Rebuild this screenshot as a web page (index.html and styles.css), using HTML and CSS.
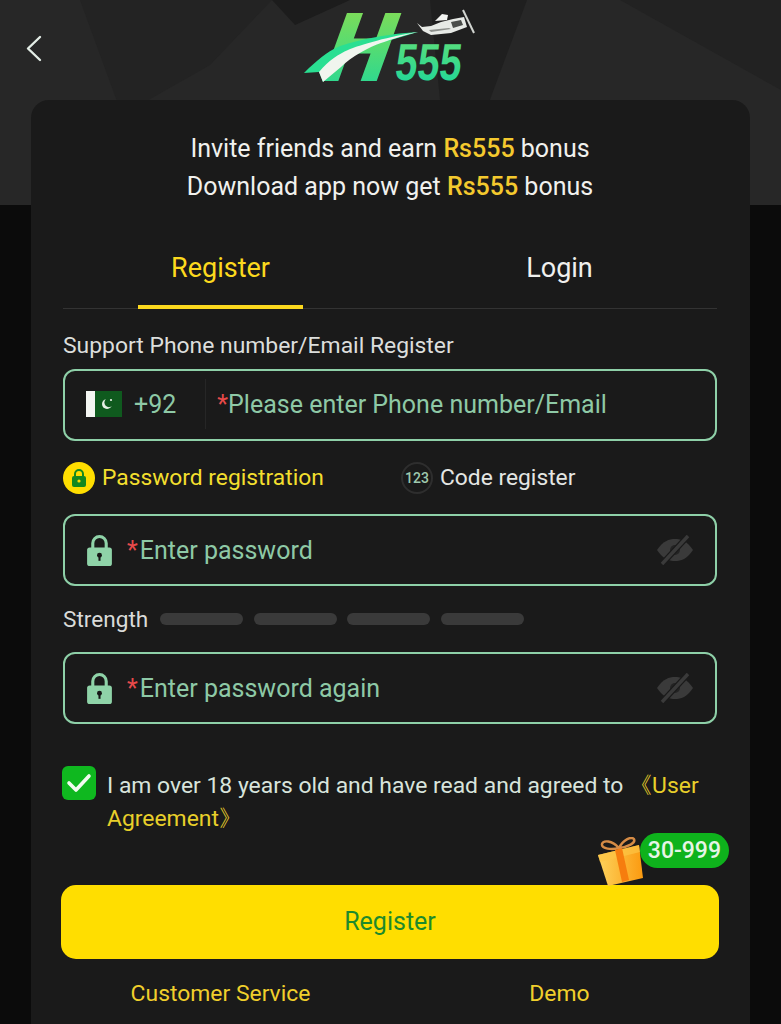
FILE: index.html
```html
<!DOCTYPE html>
<html lang="en">
<head>
    <meta charset="UTF-8">
    <meta name="viewport" content="width=device-width, initial-scale=1.0">
    <title>H555 Register</title>
    <link rel="stylesheet" href="styles.css">
</head>
<body>
    <div class="page">
        <!-- Header backdrop -->
        <svg class="backdrop" width="781" height="205" viewBox="0 0 781 205">
            <rect width="781" height="205" fill="#272727"/>
            <polygon points="80,0 272,0 210,65 122,115" fill="#232323"/>
            <polygon points="272,0 350,0 295,25" fill="#1c1c1c"/>
            <polygon points="430,0 527,0 475,140 440,100" fill="#1f1f1f"/>
            <polygon points="620,0 781,0 781,90" fill="#222222"/>
        </svg>

        <div class="topbar">
            <svg class="back" width="18" height="28" viewBox="0 0 18 28">
                <polyline points="15,2 3,13.5 15,25" fill="none" stroke="#e3ede6" stroke-width="2.4" stroke-linejoin="round" stroke-linecap="round"/>
            </svg>
            <svg class="logo" width="180" height="96" viewBox="0 0 180 96">
                <defs>
                    <linearGradient id="logoGreen" x1="0" y1="0" x2="0" y2="1">
                        <stop offset="0" stop-color="#8edb4e"/>
                        <stop offset="0.5" stop-color="#55dc72"/>
                        <stop offset="1" stop-color="#1ed69c"/>
                    </linearGradient>
                    <linearGradient id="numGreen" x1="0" y1="0" x2="0" y2="1">
                        <stop offset="0" stop-color="#62df78"/>
                        <stop offset="1" stop-color="#19d59c"/>
                    </linearGradient>
                </defs>
                <text class="logo-h" fill="url(#logoGreen)" stroke="url(#logoGreen)" stroke-width="4" transform="translate(18 75) skewX(-20) scale(0.9 0.97)">H</text>
                <path d="M3,69 C16,56 26,48 37,43 C52,37 84,30 117,28 L80,39 C60,46 38,58 22,78 L18,68 Z" fill="#2adf92"/>
                <path d="M18,68 C28,56 38,50 47,46 C58,41 90,32 117,28 C96,33 86,37 80,39 C68,43 50,53 40,63 C34,68 28,73 22,78 Z" fill="#f0f5ee"/>
                <text class="logo-num" fill="url(#numGreen)" textLength="66" lengthAdjust="spacingAndGlyphs" transform="translate(93 76) skewX(-6)">555</text>
                <!-- plane -->
                <path d="M116,19 L121,23 L130,22 L140,18 L152,15 L163,13 L166,23 L150,29 L130,31 L122,27 Z" fill="#e7eae6"/>
                <path d="M134,17 L141,10 L147,11 L146,16 Z" fill="#f3f4f2"/>
                <path d="M150,18 L160,16 L162,21 L152,24 Z" fill="#4a4d4a"/>
                <path d="M128,26 L148,24 L150,25 L130,28 Z" fill="#8d908c"/>
                <line x1="162" y1="6" x2="173" y2="29" stroke="#d2d5d1" stroke-width="2"/>
            </svg>
        </div>

        <div class="card">
            <p class="promo">Invite friends and earn <b>Rs555</b> bonus<br>Download app now get <b>Rs555</b> bonus</p>

            <div class="tabs">
                <div class="tab active">Register</div>
                <div class="tab">Login</div>
            </div>

            <div class="label">Support Phone number/Email Register</div>
            <div class="field">
                <svg class="flag" width="36" height="26" viewBox="0 0 36 26">
                    <rect width="36" height="26" fill="#0f5a1e"/>
                    <rect width="9" height="26" fill="#f4f6f2"/>
                    <circle cx="21" cy="13" r="5" fill="#e8f0e6"/>
                    <circle cx="23" cy="11.6" r="4.6" fill="#0f5a1e"/>
                    <circle cx="25" cy="9" r="1.1" fill="#e8f0e6"/>
                </svg>
                <span class="code">+92</span>
                <span class="divider"></span>
                <span class="hint"><i>*</i>Please enter Phone number/Email</span>
            </div>

            <div class="modes">
                <div class="mode on">
                    <span class="mode-icon">
                        <svg width="16" height="20" viewBox="0 0 16 20">
                            <path d="M4,9 V6 a4,4 0 0 1 8,0 V9" fill="none" stroke="#14881f" stroke-width="2"/>
                            <rect x="1" y="8" width="14" height="11" rx="2" fill="#14881f"/>
                            <circle cx="8" cy="13" r="1.6" fill="#ffde00"/>
                        </svg>
                    </span>
                    Password registration
                </div>
                <div class="mode">
                    <span class="mode-num">123</span>
                    Code register
                </div>
            </div>

            <div class="field pass">
                <svg class="lock" width="25" height="31" viewBox="0 0 24 30">
                    <path d="M5.5,13 V8 a6.5,6.5 0 0 1 13,0 V13" fill="none" stroke="#8fd3a8" stroke-width="3"/>
                    <rect y="12" width="24" height="18" rx="2.5" fill="#8fd3a8"/>
                    <circle cx="12" cy="19.5" r="2.4" fill="#171717"/>
                    <rect x="11" y="20" width="2" height="5" fill="#171717"/>
                </svg>
                <span class="hint"><i>*</i>Enter password</span>
                <svg class="eye" width="38" height="32" viewBox="0 0 38 32">
                    <path d="M1,16 C7,7 13,5 19,5 C25,5 31,7 37,16 C31,25 25,27 19,27 C13,27 7,25 1,16 Z" fill="#3a3a3a"/>
                    <circle cx="19" cy="16" r="5" fill="#242424"/>
                    <line x1="6" y1="30" x2="32" y2="2" stroke="#1a1a1a" stroke-width="6"/>
                    <line x1="6" y1="30" x2="32" y2="2" stroke="#3a3a3a" stroke-width="3.4"/>
                </svg>
            </div>

            <div class="strength">
                <span>Strength</span>
                <div class="bars">
                    <div class="bar"></div>
                    <div class="bar"></div>
                    <div class="bar"></div>
                    <div class="bar"></div>
                </div>
            </div>

            <div class="field pass">
                <svg class="lock" width="25" height="31" viewBox="0 0 24 30">
                    <path d="M5.5,13 V8 a6.5,6.5 0 0 1 13,0 V13" fill="none" stroke="#8fd3a8" stroke-width="3"/>
                    <rect y="12" width="24" height="18" rx="2.5" fill="#8fd3a8"/>
                    <circle cx="12" cy="19.5" r="2.4" fill="#171717"/>
                    <rect x="11" y="20" width="2" height="5" fill="#171717"/>
                </svg>
                <span class="hint"><i>*</i>Enter password again</span>
                <svg class="eye" width="38" height="32" viewBox="0 0 38 32">
                    <path d="M1,16 C7,7 13,5 19,5 C25,5 31,7 37,16 C31,25 25,27 19,27 C13,27 7,25 1,16 Z" fill="#3a3a3a"/>
                    <circle cx="19" cy="16" r="5" fill="#242424"/>
                    <line x1="6" y1="30" x2="32" y2="2" stroke="#1a1a1a" stroke-width="6"/>
                    <line x1="6" y1="30" x2="32" y2="2" stroke="#3a3a3a" stroke-width="3.4"/>
                </svg>
            </div>

            <div class="agree">
                <span class="check">
                    <svg width="26" height="22" viewBox="0 0 26 22">
                        <polyline points="3,11 10,18 23,4" fill="none" stroke="#f2fbf0" stroke-width="3.6" stroke-linecap="round" stroke-linejoin="round"/>
                    </svg>
                </span>
                <p>I am over 18 years old and have read and agreed to <b>《User Agreement》</b></p>
            </div>

            <div class="submit-wrap">
                <div class="gift">
                    <svg width="52" height="52" viewBox="0 0 52 52">
                        <defs>
                            <linearGradient id="giftBox" x1="0" y1="0" x2="1" y2="0">
                                <stop offset="0" stop-color="#fdd35c"/>
                                <stop offset="1" stop-color="#fb9a10"/>
                            </linearGradient>
                        </defs>
                        <path d="M21,11 C14,3 5,3 4,7 C3,12 14,13 21,11 C25,3 33,-1 36,2 C38,6 30,10 21,11 Z" fill="none" stroke="#d58b45" stroke-width="2.4"/>
                        <polygon points="0,18 41,8 45,41 10,49" fill="url(#giftBox)"/>
                        <polygon points="0,18 41,8 42,15 2,25" fill="#fcc544" opacity="0.7"/>
                        <polygon points="17,13 24,11 31,43 24,45" fill="#f67d0e"/>
                    </svg>
                    <span class="gift-tag">30-999</span>
                </div>
                <div class="submit">Register</div>
            </div>

            <div class="links">
                <span>Customer Service</span>
                <span>Demo</span>
            </div>
        </div>
    </div>
</body>
</html>
```

FILE: styles.css
```css
* {
    box-sizing: border-box;
}
body {
    margin: 0;
    background-color: #0b0b0b;
    font-family: Roboto, "Noto Sans", sans-serif;
    color: #e9ece9;
}
p {
    margin: 0;
}
.page {
    position: relative;
    height: 1024px;
    overflow: hidden;
}
.backdrop {
    position: absolute;
    top: 0;
    left: 0;
}
.topbar {
    position: relative;
    height: 100px;
    display: flex;
    justify-content: center;
}
.back {
    position: absolute;
    left: 25px;
    top: 35px;
}
.logo {
    margin-top: 4px;
    flex: none;
    overflow: visible;
}
.logo-h {
    font-family: "Liberation Sans", sans-serif;
    font-weight: 700;
    font-size: 96px;
}
.logo-num {
    font-family: "Liberation Sans", sans-serif;
    font-weight: 700;
    font-size: 52px;
}
.card {
    position: relative;
    margin: 0 31px;
    height: 924px;
    padding: 30px 33px 0 32px;
    background-color: #1a1a1a;
    border-radius: 18px 18px 0 0;
}
.promo {
    text-align: center;
    font-size: 25px;
    line-height: 38px;
    color: #f1f1ee;
}
.promo b {
    font-weight: 500;
    color: #f4c92e;
}
.tabs {
    display: flex;
    gap: 24px;
    margin-top: 22px;
    height: 81px;
    border-bottom: 1px solid #333333;
}
.tab {
    position: relative;
    flex: 1;
    padding-top: 21px;
    text-align: center;
    font-size: 27px;
    line-height: 38px;
    color: #f0f0ee;
}
.tab.active {
    color: #fcd91e;
}
.tab.active::after {
    content: "";
    position: absolute;
    bottom: -1px;
    left: 75px;
    width: 165px;
    height: 4px;
    background-color: #fcd91e;
}
.label {
    margin-top: 22px;
    font-size: 22.9px;
    line-height: 30px;
    color: #dcdedc;
}
.field {
    display: flex;
    align-items: center;
    height: 72px;
    margin-top: 8px;
    padding: 0 21px 2px;
    border: 2px solid #8ed0a8;
    border-radius: 12px;
    font-size: 25px;
}
.flag {
    margin-right: 12px;
}
.code {
    color: #8ec9a6;
    margin-right: 29px;
}
.divider {
    width: 1px;
    height: 50px;
    margin-right: 11px;
    background-color: #262626;
}
.hint {
    color: #8ec9a6;
}
.hint i {
    font-style: normal;
    color: #e84a4a;
}
.modes {
    display: flex;
    align-items: center;
    height: 73px;
    font-size: 22.8px;
}
.mode {
    display: flex;
    align-items: center;
    gap: 7px;
    color: #e4e6e3;
}
.mode.on {
    width: 338px;
    color: #f3df2e;
}
.mode-icon {
    display: flex;
    align-items: center;
    justify-content: center;
    width: 32px;
    height: 32px;
    border-radius: 50%;
    background-color: #ffde00;
}
.mode-num {
    display: flex;
    align-items: center;
    justify-content: center;
    width: 32px;
    height: 32px;
    border: 2px solid #2e2e2e;
    border-radius: 50%;
    font-size: 14px;
    font-weight: 500;
    color: #9fc9ae;
}
.field.pass {
    margin-top: 0;
    gap: 15px;
    padding: 0 21px 0 22px;
}
.field.pass .hint {
    flex: 1;
}
.field.pass .hint i {
    margin-right: 2px;
}
.strength {
    display: flex;
    align-items: center;
    height: 66px;
    font-size: 22.6px;
    color: #d9dbd9;
}
.bars {
    display: flex;
    gap: 10.5px;
    margin-left: 12px;
}
.bar {
    width: 83px;
    height: 12px;
    border-radius: 6px;
    background-color: #3a3a3a;
}
.agree {
    display: flex;
    margin-top: 42px;
    margin-left: -1px;
    font-size: 22.9px;
}
.check {
    flex: none;
    display: flex;
    align-items: center;
    justify-content: center;
    width: 34px;
    height: 34px;
    margin-right: 11px;
    border-radius: 6px;
    background-color: #0fb81f;
}
.agree p {
    padding-top: 3px;
    line-height: 33px;
    color: #d8e4dc;
}
.agree b {
    font-weight: 400;
    color: #e8cf2a;
}
.submit-wrap {
    position: relative;
    margin: 50px -2px 0;
}
.submit {
    height: 74px;
    line-height: 74px;
    text-align: center;
    font-size: 25px;
    color: #1d8a2c;
    background-color: #ffde00;
    border-radius: 15px;
}
.gift {
    position: absolute;
    top: -52px;
    right: -10px;
    display: flex;
    align-items: flex-start;
}
.gift svg {
    position: relative;
    z-index: 1;
    margin-right: -10px;
    margin-top: 4px;
}
.gift-tag {
    height: 35px;
    padding: 0 8px;
    line-height: 35px;
    border-radius: 18px;
    background-color: #0eb21c;
    font-size: 23px;
    font-weight: 500;
    color: #e6f5e6;
}
.links {
    display: flex;
    gap: 24px;
    margin-top: 20px;
    font-size: 22.9px;
    line-height: 30px;
    color: #f0cf2c;
}
.links span {
    flex: 1;
    text-align: center;
}
```
